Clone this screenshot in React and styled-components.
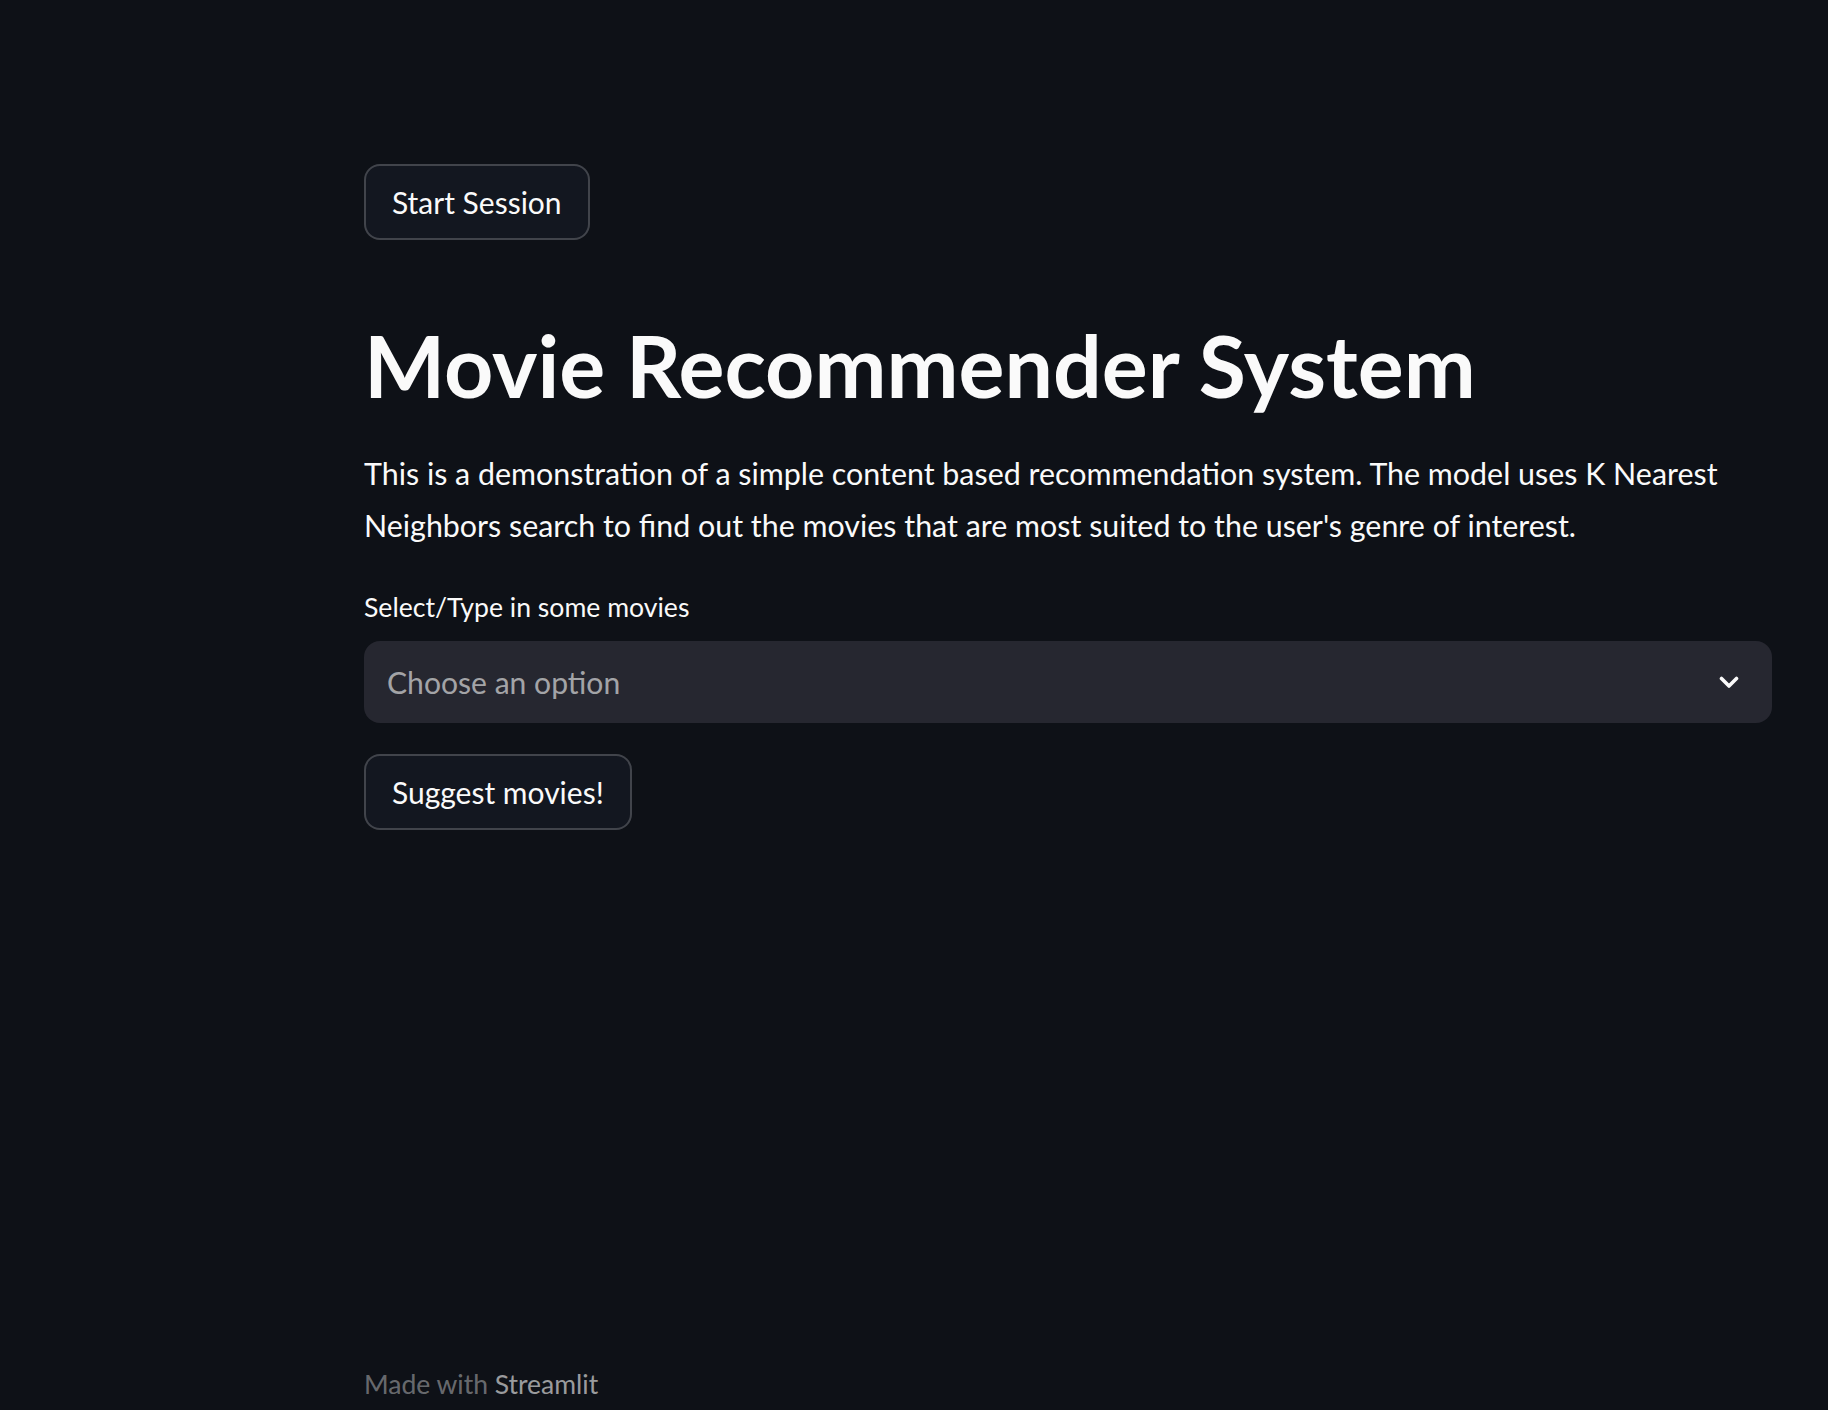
import React from "react";
import styled, { createGlobalStyle } from "styled-components";

const GlobalStyle = createGlobalStyle`
  html, body {
    margin: 0;
    padding: 0;
    background: #0e1117;
  }
  body {
    font-family: Lato, "Noto Sans", sans-serif;
    color: #fafafa;
    -webkit-font-smoothing: antialiased;
  }
`;

const Page = styled.div`
  min-height: 1410px;
  box-sizing: border-box;
  display: flex;
  flex-direction: column;
  padding: 164px 56px 9px 364px;
`;

const Main = styled.main`
  display: flex;
  flex-direction: column;
  align-items: flex-start;
  flex: 1;
`;

const Button = styled.button`
  box-sizing: border-box;
  height: 76px;
  padding: 0 26px;
  border: 2px solid rgba(250, 250, 250, 0.2);
  border-radius: 16px;
  background: #131720;
  color: #fafafa;
  font-family: inherit;
  font-size: 30px;
  line-height: 1;
  cursor: pointer;
  margin-top: ${(p) => p.$top || 0}px;
`;

const Title = styled.h1`
  margin: 73px 0 0;
  font-size: 86px;
  font-weight: 700;
  line-height: 1.2;
`;

const Text = styled.p`
  margin: 31px 0 0;
  font-size: 30.4px;
  line-height: 52px;
  width: 1408px;
`;

const Label = styled.label`
  margin-top: 41px;
  font-size: 26.6px;
  line-height: 1.2;
`;

const Select = styled.div`
  box-sizing: border-box;
  margin-top: 17px;
  width: 1408px;
  height: 82px;
  border-radius: 16px;
  background: #262730;
  display: flex;
  align-items: center;
  justify-content: space-between;
  padding: 0 33px 0 23px;
  cursor: pointer;
`;

const Placeholder = styled.span`
  font-size: 30.1px;
  color: rgba(250, 250, 250, 0.6);
`;

const Footer = styled.footer`
  font-size: 26.5px;
  line-height: 1.2;
  color: rgba(250, 250, 250, 0.4);
`;

const Brand = styled.span`
  color: rgba(250, 250, 250, 0.6);
`;

const Chevron = () => (
  <svg width="20" height="13" viewBox="0 0 20 13" fill="none">
    <path d="M2.5 2.5 L10 10 L17.5 2.5" stroke="#fafafa" strokeWidth="3.6" strokeLinecap="round" strokeLinejoin="round" />
  </svg>
);

export default function App() {
  return (
    <>
      <GlobalStyle />
      <Page>
        <Main>
          <Button>Start Session</Button>
          <Title>Movie Recommender System</Title>
          <Text>
            This is a demonstration of a simple content based recommendation system. The model uses K Nearest
            Neighbors search to find out the movies that are most suited to the user's genre of interest.
          </Text>
          <Label>Select/Type in some movies</Label>
          <Select>
            <Placeholder>Choose an option</Placeholder>
            <Chevron />
          </Select>
          <Button $top={31}>Suggest movies!</Button>
        </Main>
        <Footer>
          Made with <Brand>Streamlit</Brand>
        </Footer>
      </Page>
    </>
  );
}
